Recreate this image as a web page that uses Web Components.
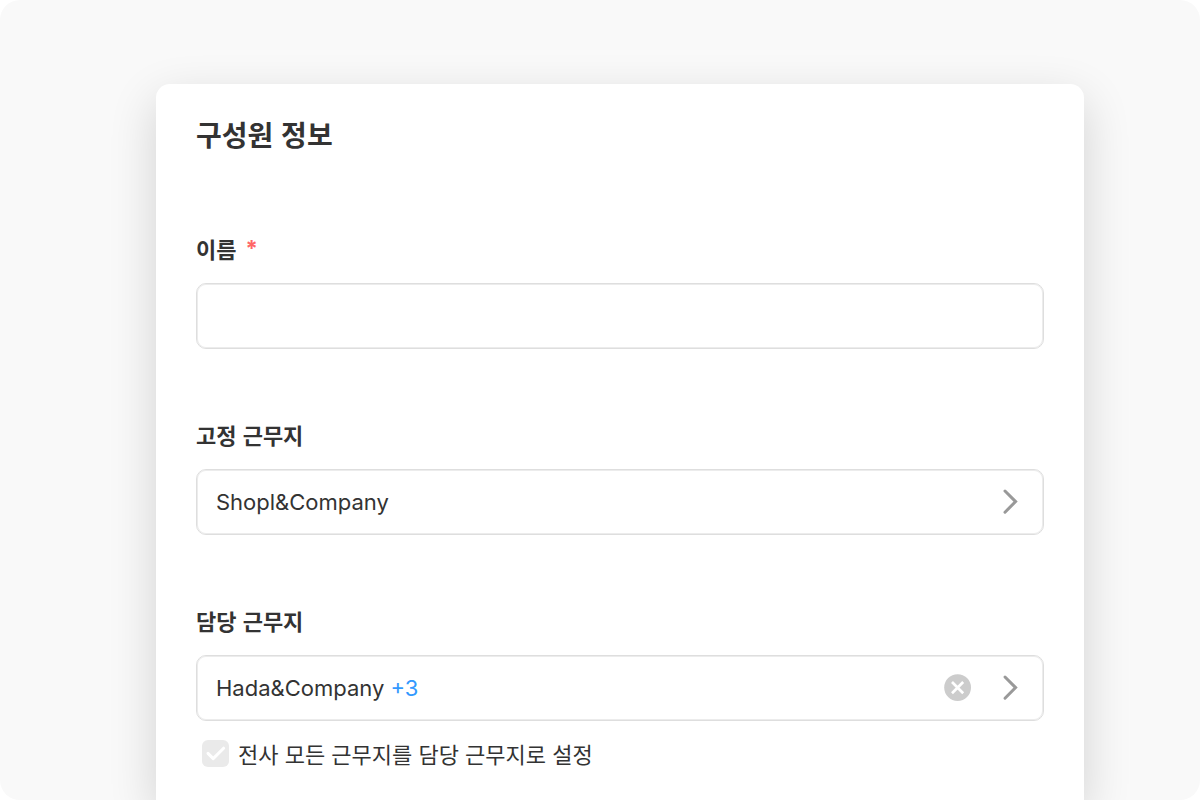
<!DOCTYPE html>
<html lang="ko">
<head>
<meta charset="utf-8">
<meta name="viewport" content="width=device-width, initial-scale=1">
<title>구성원 정보</title>
<style>
  body {
    margin: 0;
    background: #fff;
    color: #333;
    font-family: Inter, "Noto Sans CJK KR", sans-serif;
    --line: #dedede;
    --accent: #3299fe;
    --required: #ff6666;
  }
</style>
</head>
<body>
<app-stage>
  <info-card heading="구성원 정보">
    <text-field label="이름" required></text-field>
    <picker-field label="고정 근무지" value="Shopl&amp;Company"></picker-field>
    <picker-field label="담당 근무지" value="Hada&amp;Company" extra="+3" clearable>
      <check-option label="전사 모든 근무지를 담당 근무지로 설정"></check-option>
    </picker-field>
  </info-card>
</app-stage>

<script>
  const escapeText = (s) => (s || '').replace(/&/g, '&amp;').replace(/</g, '&lt;');

  const fieldStyles = `
    :host { display: block; }
    * { box-sizing: border-box; }
    .label {
      display: flex;
      gap: 9px;
      margin-bottom: 19px;
      font: 700 22px/32px "Noto Sans CJK KR", sans-serif;
    }
    .box {
      display: flex;
      align-items: center;
      width: 100%;
      height: 66px;
      border: 1px solid var(--line);
      border-radius: 10px;
      background: #fff;
      box-shadow: inset 0 0 0 1px #ececec;
    }
  `;

  customElements.define('app-stage', class extends HTMLElement {
    constructor() {
      super();
      this.attachShadow({ mode: 'open' }).innerHTML = `
        <style>
          :host {
            display: flex;
            flex-direction: column;
            box-sizing: border-box;
            min-height: 100vh;
            padding: 84px 116px 0 156px;
            border-radius: 20px;
            overflow: hidden;
            background: #f9f9f9;
          }
        </style>
        <slot></slot>`;
    }
  });

  customElements.define('info-card', class extends HTMLElement {
    connectedCallback() {
      this.attachShadow({ mode: 'open' }).innerHTML = `
        <style>
          :host {
            display: block;
            flex: 1;
            padding: 30px 40px;
            border-radius: 14px 14px 0 0;
            background: #fff;
            box-shadow: 0 16px 48px rgba(0, 0, 0, .16);
          }
          h1 {
            margin: 0 0 78px;
            font: 700 28px/40px "Noto Sans CJK KR", sans-serif;
          }
          form { display: grid; gap: 69px; }
        </style>
        <h1>${escapeText(this.getAttribute('heading'))}</h1>
        <form><slot></slot></form>`;
    }
  });

  customElements.define('text-field', class extends HTMLElement {
    connectedCallback() {
      const required = this.hasAttribute('required');
      this.attachShadow({ mode: 'open' }).innerHTML = `
        <style>
          ${fieldStyles}
          .mark { color: var(--required); font-family: Inter, sans-serif; font-weight: 700; }
          input { padding: 0 20px; font: 400 22px/32px Inter, "Noto Sans CJK KR", sans-serif; color: inherit; outline: none; }
          input:focus { border-color: var(--accent); }
        </style>
        <label class="label" for="control">${escapeText(this.getAttribute('label'))}${required ? '<span class="mark">*</span>' : ''}</label>
        <input class="box" id="control" type="text"${required ? ' required' : ''}>`;
    }
  });

  customElements.define('picker-field', class extends HTMLElement {
    connectedCallback() {
      const extra = this.getAttribute('extra');
      this.attachShadow({ mode: 'open' }).innerHTML = `
        <style>
          ${fieldStyles}
          button { margin: 0; padding: 0; border: 0; background: none; color: inherit; cursor: pointer; }
          svg { display: block; }
          .value {
            flex: 1;
            height: 100%;
            padding-left: 19px;
            text-align: left;
            font: 400 22px/32px Inter, "Noto Sans CJK KR", sans-serif;
          }
          .extra { color: var(--accent); }
          .clear { margin-right: 24px; }
          .open { margin-right: 19px; }
        </style>
        <label class="label" for="control">${escapeText(this.getAttribute('label'))}</label>
        <div class="box">
          <button class="value" id="control" type="button">${escapeText(this.getAttribute('value'))}${extra ? ` <span class="extra">${escapeText(extra)}</span>` : ''}</button>
          ${this.hasAttribute('clearable') ? `
          <button class="clear" type="button" aria-label="지우기">
            <svg width="28" height="28" viewBox="0 0 28 28" fill="none">
              <circle cx="13.6" cy="13.6" r="13.4" fill="#ccc"/>
              <path d="M8 8 19.2 19.2M19.2 8 8 19.2" stroke="#fff" stroke-width="2.7"/>
            </svg>
          </button>` : ''}
          <button class="open" type="button" aria-label="선택">
            <svg width="28" height="28" viewBox="0 0 28 28" fill="none">
              <path d="M9 3 19.6 13.6 9 24.2" stroke="#999" stroke-width="3" stroke-linecap="round"/>
            </svg>
          </button>
        </div>
        <slot></slot>`;
    }
  });

  customElements.define('check-option', class extends HTMLElement {
    connectedCallback() {
      this.attachShadow({ mode: 'open' }).innerHTML = `
        <style>
          :host { display: block; padding: 16px 0 0 6px; }
          label {
            display: flex;
            align-items: center;
            gap: 9px;
            font: 400 22px/32px "Noto Sans CJK KR", sans-serif;
          }
          .tick { display: grid; }
          .tick > * { grid-area: 1 / 1; }
          input {
            appearance: none;
            width: 27px;
            height: 27px;
            margin: 0;
            border-radius: 6px;
            background: #eaeaea;
          }
          input:checked { background: var(--accent); }
          svg { pointer-events: none; }
        </style>
        <label for="control">
          <span class="tick">
            <input id="control" type="checkbox">
            <svg width="27" height="27" viewBox="0 0 27 27" fill="none" aria-hidden="true">
              <path d="M6 13.4 11.2 18.6 21.6 8.2" stroke="#fff" stroke-width="3" stroke-linecap="round" stroke-linejoin="round"/>
            </svg>
          </span>
          ${escapeText(this.getAttribute('label'))}
        </label>`;
    }
  });
</script>
</body>
</html>
